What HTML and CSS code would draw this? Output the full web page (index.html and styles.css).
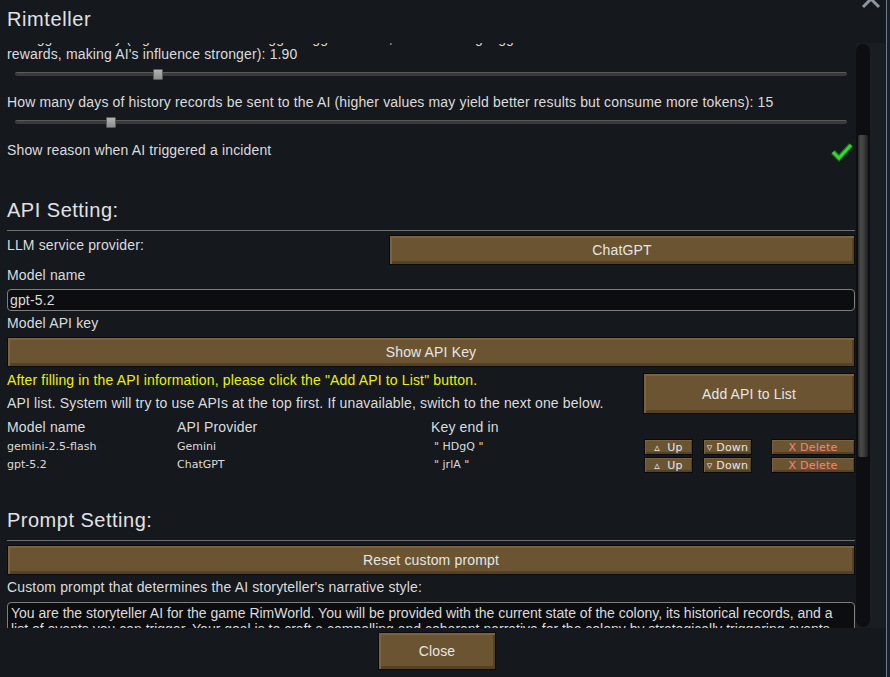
FILE: index.html
```html
<!DOCTYPE html>
<html lang="en">
<head>
    <meta charset="UTF-8">
    <title>Rimteller</title>
    <link rel="stylesheet" href="styles.css">
</head>
<body>
    <div class="window">
        <svg class="close-x" width="20" height="20" viewBox="0 0 20 20">
            <path d="M2 2 L18 18 M18 2 L2 18" stroke="#8e949b" stroke-width="3" fill="none"/>
        </svg>
        <h1 class="title">Rimteller</h1>

        <div class="main">
            <div class="view">
                <div class="content">
                    <p class="label">AI trigger intensity (higher values let AI trigger bigger threats, but also bring bigger and<br>
                        rewards, making AI's influence stronger): 1.90</p>
                    <div class="slider"><span class="track"></span><span class="knob" style="left: 138px"></span></div>

                    <p class="label">How many days of history records be sent to the AI (higher values may yield better results but consume more tokens): 15</p>
                    <div class="slider"><span class="track"></span><span class="knob" style="left: 91px"></span></div>

                    <div class="check-row">
                        <p class="label">Show reason when AI triggered a incident</p>
                        <svg class="check" width="24" height="22" viewBox="0 0 24 22">
                            <path d="M3 12 L9 18 L21 5" stroke="#1b6f1b" stroke-width="5.5" fill="none"/>
                            <path d="M3 12 L9 18 L21 5" stroke="#33d633" stroke-width="3" fill="none"/>
                        </svg>
                    </div>

                    <h2 class="section">API Setting:</h2>
                    <hr>
                    <div class="provider-row">
                        <p class="label">LLM service provider:</p>
                        <button class="btn provider">ChatGPT</button>
                    </div>
                    <p class="label gap2">Model name</p>
                    <div class="field">gpt-5.2</div>
                    <p class="label gap4">Model API key</p>
                    <button class="btn wide gap6">Show API Key</button>

                    <div class="add-row">
                        <div class="add-text">
                            <p class="label notice">After filling in the API information, please click the "Add API to List" button.</p>
                            <p class="label gap7">API list. System will try to use APIs at the top first. If unavailable, switch to the next one below.</p>
                        </div>
                        <button class="btn add">Add API to List</button>
                    </div>

                    <div class="api-table">
                        <div class="th">Model name</div>
                        <div class="th">API Provider</div>
                        <div class="th">Key end in</div>
                        <div></div>

                        <div class="td">gemini-2.5-flash</div>
                        <div class="td">Gemini</div>
                        <div class="td key">" HDgQ "</div>
                        <div class="actions">
                            <button class="btn small up">&#9653;&nbsp; Up</button>
                            <button class="btn small down">&#9663; Down</button>
                            <button class="btn small delete">X Delete</button>
                        </div>

                        <div class="td">gpt-5.2</div>
                        <div class="td">ChatGPT</div>
                        <div class="td key">" jrlA "</div>
                        <div class="actions">
                            <button class="btn small up">&#9653;&nbsp; Up</button>
                            <button class="btn small down">&#9663; Down</button>
                            <button class="btn small delete">X Delete</button>
                        </div>
                    </div>

                    <h2 class="section prompt">Prompt Setting:</h2>
                    <hr>
                    <button class="btn wide gap4">Reset custom prompt</button>
                    <p class="label gap3">Custom prompt that determines the AI storyteller's narrative style:</p>
                    <div class="prompt-box">You are the storyteller AI for the game RimWorld. You will be provided with the current state of the colony, its historical records, and a list of events you can trigger. Your goal is to craft a compelling and coherent narrative for the colony by strategically triggering events based on the situation.</div>
                </div>
            </div>
            <div class="gutter">
                <div class="scroll-track"><div class="scroll-thumb"></div></div>
            </div>
        </div>

        <div class="footer">
            <button class="btn close">Close</button>
        </div>
    </div>
</body>
</html>
```

FILE: styles.css
```css
* {
    margin: 0;
    padding: 0;
    box-sizing: border-box;
}
body {
    background: #1c2026;
    color: #dcdcdc;
    font-family: "Liberation Sans", Arial, sans-serif;
    font-size: 14px;
    letter-spacing: 0.15px;
    overflow: hidden;
}
.window {
    position: relative;
    width: 887px;
    height: 677px;
    background: #15181d;
    border-right: 1px solid #6f7a88;
}
.close-x {
    position: absolute;
    left: 861px;
    top: -11px;
}
.title {
    font-size: 20px;
    letter-spacing: 0.6px;
    font-weight: normal;
    color: #e2e2e2;
    height: 43px;
    line-height: 38px;
    padding-left: 7px;
}
.main {
    display: flex;
    height: 585px;
}
.view {
    width: 856px;
    overflow: hidden;
}
.content {
    margin-top: -13px;
    padding: 0 1px 0 7px;
}
.label {
    line-height: 16px;
}
.gap2 { margin-top: 2px; }
.gap3 { margin-top: 4px; }
.gap4 { margin-top: 4px; }
.gap6 { margin-top: 6px; }
.gap7 { margin-top: 7px; }

.slider {
    position: relative;
    height: 22px;
    margin: 1px 8px 9px 8px;
}
.track {
    display: block;
    position: absolute;
    left: 0;
    right: 0;
    top: 9px;
    height: 4px;
    border-radius: 2px;
    background: #3a3a3a;
    border-top: 1px solid #5a5a5a;
}
.knob {
    position: absolute;
    top: 6px;
    width: 10px;
    height: 11px;
    background: linear-gradient(#b4b4b4, #8c8c8c);
    border: 1px solid #5c5c5c;
    border-radius: 1px;
}
.check-row {
    display: flex;
    justify-content: space-between;
    align-items: flex-start;
    height: 20px;
}
.check {
    margin-top: -2px;
    margin-right: 1px;
}
.section {
    font-size: 20px;
    letter-spacing: 0.5px;
    font-weight: normal;
    line-height: 26px;
    color: #e2e2e2;
    margin-top: 35px;
    margin-bottom: 7px;
}
.section.prompt {
    margin-top: 34px;
}
hr {
    border: 0;
    height: 1px;
    background: #6e6e6e;
}
.btn {
    display: block;
    font-family: "Liberation Sans", Arial, sans-serif;
    font-size: 14px;
    letter-spacing: 0.15px;
    color: #e6e6e6;
    background: #6b5431;
    border: 1px solid #0b0b0b;
    box-shadow: inset 2px 2px 0 #7b6240, inset -2px -3px 0 #56421f;
    cursor: pointer;
}
.wide {
    width: 100%;
    height: 30px;
}
.provider-row {
    display: flex;
    justify-content: space-between;
    margin-top: 4px;
}
.provider-row .label {
    padding-top: 2px;
}
.provider {
    width: 466px;
    height: 30px;
}
.field {
    margin-top: 6px;
    height: 22px;
    line-height: 20px;
    padding-left: 2px;
    background: #0c0d0f;
    border: 1px solid #7e7e7e;
    border-radius: 4px;
    color: #dcdcdc;
}
.add-row {
    display: flex;
    justify-content: space-between;
    margin-top: 5px;
    height: 42px;
}
.notice {
    color: #f0f000;
}
.add {
    width: 212px;
    height: 41px;
    margin-top: 1px;
}
.api-table {
    display: grid;
    grid-template-columns: 170px 254px 213px 211px;
    row-gap: 2px;
    margin-top: 5px;
}
.th {
    line-height: 16px;
    margin-bottom: 2px;
}
.td {
    font-family: "DejaVu Sans", sans-serif;
    font-size: 11px;
    letter-spacing: 0;
    line-height: 16px;
}
.key {
    padding-left: 3px;
}
.actions {
    display: flex;
}
.small {
    height: 16px;
    font-family: "DejaVu Sans", sans-serif;
    font-size: 11px;
    letter-spacing: 0.2px;
    line-height: 13px;
    box-shadow: inset 1px 1px 0 #7b6240, inset -1px -2px 0 #56421f;
}
.up {
    width: 49px;
}
.down {
    width: 49px;
    margin-left: 10px;
}
.delete {
    width: 84px;
    margin-left: 19px;
    color: #ff7f7f;
}
.prompt-box {
    margin-top: 7px;
    height: 40px;
    padding: 2px 3px;
    line-height: 16px;
    letter-spacing: 0;
    background: #0c0d0f;
    border: 1px solid #7e7e7e;
    border-radius: 4px;
}
.gutter {
    width: 30px;
    background: #1a1e23;
}
.scroll-track {
    width: 14px;
    height: 583px;
    margin-top: 1px;
    background: #0c0e11;
    border-radius: 7px;
    padding-top: 91px;
}
.scroll-thumb {
    width: 10px;
    height: 322px;
    margin-left: 2px;
    background: linear-gradient(90deg, #2a2a2a, #4a4a4a 30%, #3c3c3c 60%, #1e1e1e);
    border-radius: 2px;
}
.footer {
    display: flex;
    justify-content: center;
    padding: 4px 12px 0 0;
}
.close {
    width: 118px;
    height: 38px;
}
```
